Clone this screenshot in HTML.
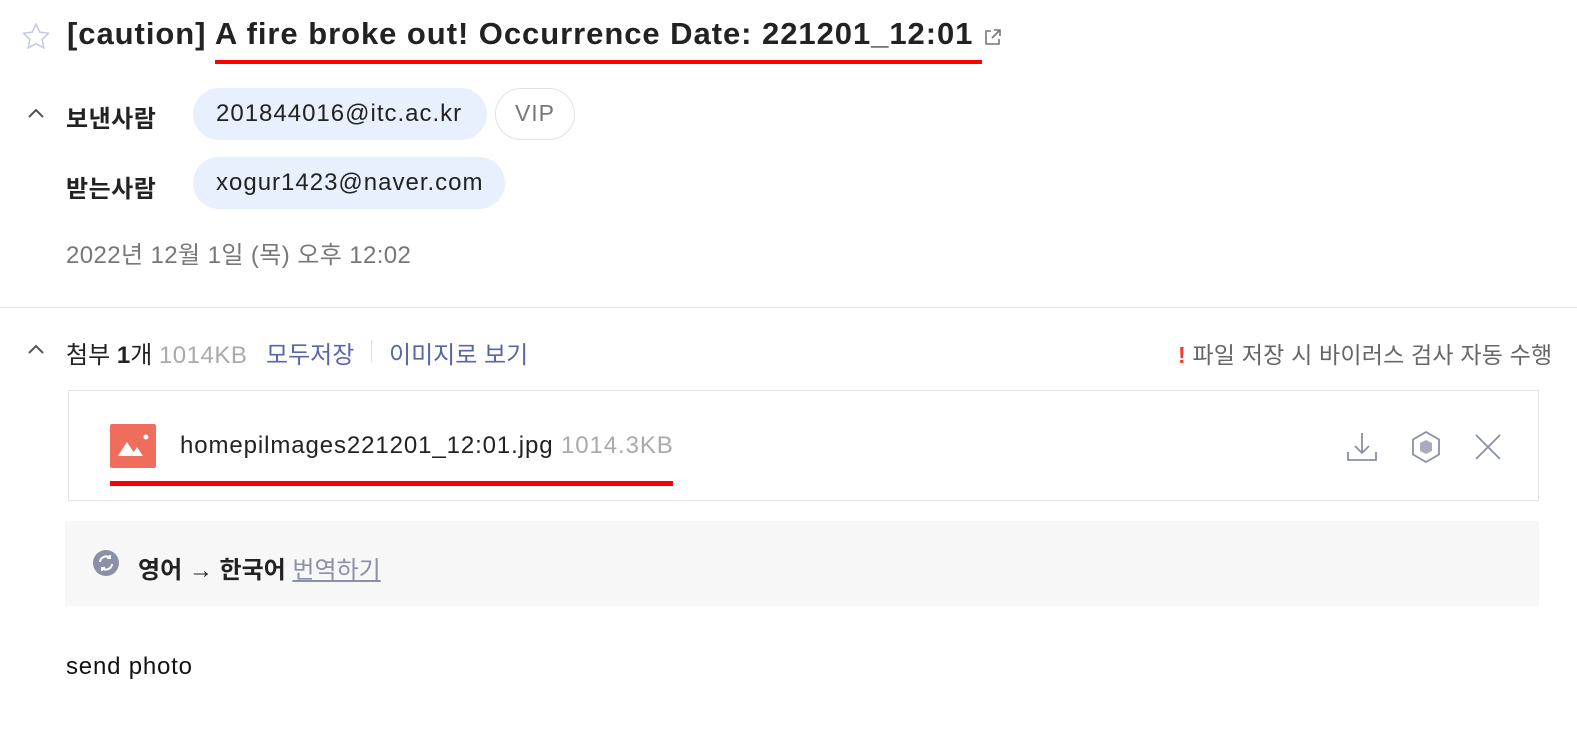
<!DOCTYPE html>
<html><head><meta charset="utf-8"><style>
*{margin:0;padding:0;box-sizing:border-box}
body{width:1577px;height:732px;background:#fff;font-family:"Liberation Sans","Noto Sans CJK KR",sans-serif;color:#222;position:relative;overflow:hidden}
.a{position:absolute;white-space:nowrap}
.l{letter-spacing:1px}
.chip{position:absolute;height:52px;border-radius:26px;background:#e8f0fd;font-size:24px;line-height:52px;padding:0 23px;color:#222;letter-spacing:1px}
</style></head><body>
<svg class="a" style="left:20px;top:21px" width="32" height="32" viewBox="0 0 32 32"><path d="M16 3l3.8 8.2 8.9 1-6.6 6.1 1.8 8.8L16 22.6 8.1 27.1l1.8-8.8L3.3 12.2l8.9-1z" fill="none" stroke="#c8cbe0" stroke-width="1.6" stroke-linejoin="round"/></svg>
<div class="a" style="left:67px;top:16px;font-size:31px;font-weight:bold;color:#222;letter-spacing:0.95px">[caution] A fire broke out! Occurrence Date: 221201_12:01</div>
<svg class="a" style="left:983px;top:27px" width="20" height="20" viewBox="0 0 20 20"><path d="M8 4H3v13h13v-5M11 3h6v6M17 3l-8 8" fill="none" stroke="#777" stroke-width="1.6"/></svg>
<div class="a" style="left:215px;top:60px;width:767px;height:4px;background:#f00"></div>

<svg class="a" style="left:26px;top:106px" width="20" height="14" viewBox="0 0 20 14"><path d="M3 11l7-7 7 7" fill="none" stroke="#555" stroke-width="2"/></svg>
<div class="a" style="left:66px;top:99px;font-size:24px;font-weight:bold;color:#222;letter-spacing:0.5px">보낸사람</div>
<div class="chip" style="left:193px;top:88px;width:294px">201844016@itc.ac.kr</div>
<div class="a" style="left:495px;top:88px;width:80px;height:52px;border:1.5px solid #e2e2e2;border-radius:26px;font-size:23px;line-height:49px;text-align:center;color:#777;letter-spacing:1px">VIP</div>
<div class="a" style="left:66px;top:169px;font-size:24px;font-weight:bold;color:#222;letter-spacing:0.5px">받는사람</div>
<div class="chip" style="left:193px;top:157px;width:312px">xogur1423@naver.com</div>
<div class="a" style="left:66px;top:235px;font-size:24px;color:#777;letter-spacing:0.4px">2022년 12월 1일 (목) 오후 12:02</div>
<div class="a" style="left:0;top:307px;width:1577px;height:1px;background:#e6e6e6"></div>

<svg class="a" style="left:26px;top:342px" width="20" height="14" viewBox="0 0 20 14"><path d="M3 11l7-7 7 7" fill="none" stroke="#555" stroke-width="2"/></svg>
<div class="a" style="left:66px;top:335px;font-size:24px;color:#222">첨부 <b>1</b>개 <span style="color:#aaa;letter-spacing:0.5px">1014KB</span></div>
<div class="a" style="left:266px;top:335px;font-size:24px;color:#5865a8">모두저장</div>
<div class="a" style="left:371px;top:340px;width:1px;height:22px;background:#e2e2e2"></div>
<div class="a" style="left:389px;top:335px;font-size:24px;color:#5865a8">이미지로 보기</div>
<div class="a" style="left:1178px;top:336px;font-size:23px;color:#666;letter-spacing:0.2px"><span style="color:#f03c2e;font-weight:bold">!</span> 파일 저장 시 바이러스 검사 자동 수행</div>

<div class="a" style="left:68px;top:390px;width:1471px;height:111px;border:1.5px solid #e3e3e8"></div>
<div class="a" style="left:110px;top:424px;width:46px;height:44px;background:#ee6d5d;border-radius:2px"></div>
<svg class="a" style="left:110px;top:424px" width="46" height="44" viewBox="0 0 46 44"><path d="M8 32l9-14 9 14zM21 32l6-9 6 9z" fill="#fff"/><circle cx="36" cy="13" r="2.5" fill="#fff"/></svg>
<div class="a" style="left:180px;top:432px;font-size:24px;color:#222;letter-spacing:0.9px">homepilmages221201_12:01.jpg <span style="color:#aaa">1014.3KB</span></div>
<div class="a" style="left:110px;top:481px;width:563px;height:5px;background:#f00"></div>
<svg class="a" style="left:1345px;top:430px" width="34" height="34" viewBox="0 0 34 34"><path d="M17 3v20M10 16l7 7 7-7M3 22v8h28v-8" fill="none" stroke="#8a8ea8" stroke-width="1.8"/></svg>
<svg class="a" style="left:1409px;top:430px" width="34" height="34" viewBox="0 0 34 34"><path d="M17 2l13 7.5v15L17 32 4 24.5v-15z" fill="none" stroke="#8a8ea8" stroke-width="1.8"/><path d="M11 13l6-3 6 3v8l-6 3-6-3z" fill="#a9acc0"/></svg>
<svg class="a" style="left:1474px;top:433px" width="28" height="28" viewBox="0 0 28 28"><path d="M2 2l24 24M26 2L2 26" stroke="#8a8ea8" stroke-width="1.8"/></svg>

<div class="a" style="left:65px;top:521px;width:1474px;height:85px;background:#f7f7f8"></div>
<svg class="a" style="left:92px;top:549px" width="28" height="28" viewBox="0 0 28 28"><circle cx="14" cy="14" r="13" fill="#8c90a6"/><path d="M8 13a6 6 0 0 1 10-4M20 15a6 6 0 0 1-10 4M18 6v3h-3M10 22v-3h3" fill="none" stroke="#fff" stroke-width="2"/></svg>
<div class="a" style="left:138px;top:550px;font-size:24px;font-weight:bold;color:#222">영어 → 한국어 <span style="font-weight:normal;color:#8b8fa8;text-decoration:underline">번역하기</span></div>

<div class="a" style="left:66px;top:653px;font-size:24px;color:#111;letter-spacing:0.8px">send photo</div>
</body></html>
